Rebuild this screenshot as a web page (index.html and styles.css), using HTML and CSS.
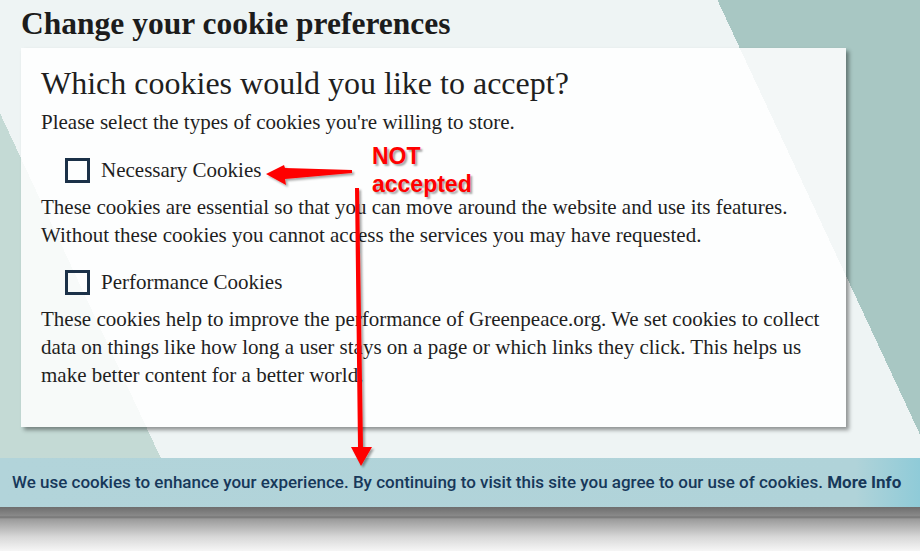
FILE: index.html
```html
<!DOCTYPE html>
<html lang="en">
<head>
<meta charset="utf-8"/>
<meta content="width=device-width, initial-scale=1.0" name="viewport"/>
<title>Change your cookie preferences</title>
<link rel="stylesheet" href="styles.css">
</head>
<body>
<div class="page">
  <main class="prefs">
    <h1 class="prefs-title">Change your cookie preferences</h1>
    <section class="prefs-card">
      <h2 class="card-heading">Which cookies would you like to accept?</h2>
      <p class="card-lead">Please select the types of cookies you're willing to store.</p>

      <label class="option"><span class="option-box"></span>Necessary Cookies</label>
      <p class="option-text">These cookies are essential so that you can move around the website and use its features.<br>Without these cookies you cannot access the services you may have requested.</p>

      <label class="option option-second"><span class="option-box"></span>Performance Cookies</label>
      <p class="option-text">These cookies help to improve the performance of Greenpeace.org. We set cookies to collect<br>data on things like how long a user stays on a page or which links they click. This helps us<br>make better content for a better world.</p>
    </section>
  </main>

  <div class="cookie-bar">We use cookies to enhance your experience. By continuing to visit this site you agree to our use of cookies. <a href="#" class="cookie-more">More Info</a></div>
  <div class="window-edge"></div>

  <!-- red markup drawn over the screenshot -->
  <div class="note">
    <svg class="note-arrows" width="920" height="551" viewBox="0 0 920 551">
      <defs>
        <filter id="drop" x="-50%" y="-50%" width="200%" height="200%">
          <feDropShadow dx="2" dy="2" stdDeviation="1.2" flood-color="#000" flood-opacity="0.35"/>
        </filter>
      </defs>
      <g fill="#ff0000" filter="url(#drop)">
        <polygon points="352,170 352,173 285,179 286,185 266,174 284,165 285,168"/>
        <polygon points="355,188 359,188 363,447 372,447 361,466 351,447 358,447"/>
      </g>
    </svg>
    <div class="note-label">NOT<br>accepted</div>
  </div>
</div>
</body>
</html>
```

FILE: styles.css
```css
body {
    margin: 0;
    font-family: 'Liberation Serif', serif;
    color: #1f1f1f;
}

.page {
    position: relative;
    height: 551px;
    overflow: hidden;
    display: flex;
    flex-direction: column;
    background: linear-gradient(65deg, #c4dad5 185px, #eef4f4 185px, #eef4f4 883px, #a8c7c3 883px);
}

.prefs {
    flex: 1;
    padding-left: 21px;
}

.prefs-title {
    margin: 0;
    font-size: 31.5px;
    line-height: 48px;
    font-weight: bold;
    color: #1c1c1c;
}

.prefs-card {
    width: 785px;
    padding: 15px 20px 38px;
    background-color: rgba(255, 255, 255, 0.86);
    box-shadow: 3px 3px 4px rgba(0, 0, 0, 0.4);
}

.card-heading {
    margin: 0;
    font-size: 32px;
    line-height: 40px;
    font-weight: normal;
}

.card-lead,
.option-text {
    margin: 0;
    font-size: 21px;
    line-height: 28px;
}

.card-lead {
    margin-top: 5px;
}

.option {
    display: flex;
    align-items: center;
    margin: 20px 0 9px 24px;
    font-size: 21px;
    line-height: 28px;
}

.option-second {
    margin-top: 19px;
}

.option-box {
    width: 19px;
    height: 19px;
    border: 3px solid #1b3148;
    margin-right: 11px;
}

.cookie-bar {
    height: 49px;
    padding-left: 12px;
    line-height: 49px;
    font-family: Roboto, 'Liberation Sans', sans-serif;
    font-size: 17px;
    font-weight: 500;
    color: #17385a;
    background: linear-gradient(90deg, #b2d4da 0%, #b0d3d9 93%, #8fcbd8 100%);
    white-space: nowrap;
}

.cookie-more {
    color: #17385a;
    font-weight: 700;
    text-decoration: none;
}

.window-edge {
    height: 44px;
    background: linear-gradient(180deg, #6e6e6e 0px, #8a8a8a 9px, #727272 10px, #9a9a9a 12px, #d8d8d8 30px, #f6f6f6 44px);
}

.note {
    position: absolute;
    left: 0;
    top: 0;
    width: 920px;
    height: 551px;
    pointer-events: none;
}

.note-arrows {
    position: absolute;
    left: 0;
    top: 0;
}

.note-label {
    position: absolute;
    left: 372px;
    top: 142px;
    font-family: 'Liberation Sans', Arial, sans-serif;
    font-size: 23px;
    font-weight: bold;
    line-height: 28px;
    color: #ff0000;
    -webkit-text-stroke: 3px #ffffff;
    paint-order: stroke fill;
    text-shadow: 2px 2px 2px rgba(0, 0, 0, 0.35);
}
```
